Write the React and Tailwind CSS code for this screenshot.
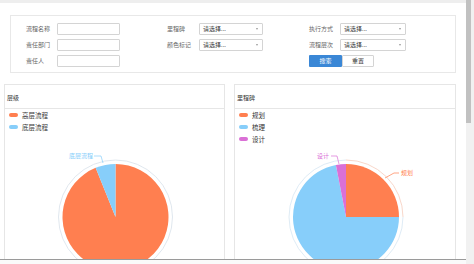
import React from 'react';

const font = { fontFamily: '"Noto Sans CJK SC", "Noto Sans", sans-serif' };

const Field = ({ label, children, labelW = 'w-[31px]' }) => (
  <div className="flex items-center h-[12px]">
    <span className={`${labelW} text-[6px] text-[#666] leading-none`}>{label}</span>
    {children}
  </div>
);

const TextInput = () => (
  <div className="w-[63px] h-[12px] border border-[#d4d4d4] rounded-[1px] bg-white" />
);

const Select = ({ w = 'w-[64px]' }) => (
  <div className={`${w} h-[12px] border border-[#d4d4d4] rounded-[1px] bg-white flex items-center justify-between pl-[3px] pr-[4px]`}>
    <span className="text-[6px] text-[#333] leading-none">请选择...</span>
    <span className="w-0 h-0 border-l-[1.5px] border-r-[1.5px] border-t-[2px] border-l-transparent border-r-transparent border-t-[#999]" />
  </div>
);

const Legend = ({ items }) => (
  <div className="absolute left-[4px] top-[2px] flex flex-col gap-[4px]">
    {items.map((it) => (
      <div key={it.name} className="flex items-center h-[8px]">
        <span className="w-[9px] h-[4px] rounded-full" style={{ backgroundColor: it.color }} />
        <span className="ml-[4px] text-[6.5px] text-[#333] leading-none">{it.name}</span>
      </div>
    ))}
  </div>
);

const Panel = ({ title, legend, children }) => (
  <div className="border border-[#e6e6e6] bg-white h-[200px] flex flex-col">
    <div className="h-[25px] flex items-center pl-[2px] border-b border-[#e6e6e6]">
      <span className="text-[6px] text-[#333] leading-none mt-[3px]">{title}</span>
    </div>
    <div className="relative flex-1">
      <Legend items={legend} />
      {children}
    </div>
  </div>
);

const LeftPie = () => (
  <svg width="220" height="174" className="block">
    <circle cx="110.5" cy="108" r="57" fill="none" stroke="#d8e1ea" strokeWidth="0.8" />
    <path d="M110.5 108 L110.5 55 A53 53 0 1 1 90.65 58.86 Z" fill="#ff7f50" />
    <path d="M110.5 108 L90.65 58.86 A53 53 0 0 1 110.5 55 Z" fill="#87cefa" />
    <polyline points="98,54 96,47 89,47" fill="none" stroke="#87cefa" strokeWidth="0.7" />
    <text x="64" y="49" fontSize="6" fill="#87cefa" style={font}>底层流程</text>
  </svg>
);

const RightPie = () => (
  <svg width="220" height="174" className="block">
    <path d="M111 51 A57 57 0 0 1 168 108" fill="none" stroke="#f6cdbd" strokeWidth="0.8" />
    <path d="M168 108 A57 57 0 1 1 111 51" fill="none" stroke="#d6e6f2" strokeWidth="0.8" />
    <path d="M111 108 L111 55 A53 53 0 0 1 164 108 Z" fill="#ff7f50" />
    <path d="M111 108 L164 108 A53 53 0 1 1 100.89 55.97 Z" fill="#87cefa" />
    <path d="M111 108 L100.89 55.97 A53 53 0 0 1 111 55 Z" fill="#da70d6" />
    <polyline points="150,69 159,64 164,64" fill="none" stroke="#ff7f50" strokeWidth="0.7" />
    <text x="166" y="66" fontSize="6" fill="#ff7f50" style={font}>规划</text>
    <polyline points="104,55 102,47 96,47" fill="none" stroke="#da70d6" strokeWidth="0.7" />
    <text x="82" y="49" fontSize="6" fill="#da70d6" style={font}>设计</text>
  </svg>
);

export default function App() {
  return (
    <div className="w-[474px] h-[264px] flex bg-white overflow-hidden" style={font}>
      <div className="flex-1 flex flex-col min-w-0">
        <div className="h-[259px] overflow-hidden flex flex-col">
          <div className="h-[3px] bg-[#eeeeee] shrink-0" />
          {/* Search form */}
          <div className="mx-[10px] mt-[12px] h-[58px] border border-[#e8e8e8] pt-[7px] pl-[15px] shrink-0">
            <div className="grid grid-cols-[141px_142px_1fr] gap-y-[4px]">
              <Field label="流程名称"><TextInput /></Field>
              <Field label="里程碑" labelW="w-[32px]"><Select /></Field>
              <Field label="执行方式"><Select w="w-[66px]" /></Field>
              <Field label="责任部门"><TextInput /></Field>
              <Field label="颜色标记" labelW="w-[32px]"><Select /></Field>
              <Field label="流程层次"><Select w="w-[66px]" /></Field>
              <Field label="责任人"><TextInput /></Field>
              <div />
              <div className="flex h-[12px]">
                <button className="w-[33px] h-[12px] bg-[#3a87d6] text-white text-[6px] leading-none rounded-[1px]">搜索</button>
                <button className="w-[32px] h-[12px] bg-white border border-[#d4d4d4] text-[#333] text-[6px] leading-none rounded-[1px]">重置</button>
              </div>
            </div>
          </div>
          {/* Charts */}
          <div className="grid grid-cols-[221px_222px] gap-[9px] ml-[4px] mt-[11px]">
            <Panel
              title="层级"
              legend={[
                { name: '高层流程', color: '#ff7f50' },
                { name: '底层流程', color: '#87cefa' },
              ]}
            >
              <LeftPie />
            </Panel>
            <Panel
              title="里程碑"
              legend={[
                { name: '规划', color: '#ff7f50' },
                { name: '梳理', color: '#87cefa' },
                { name: '设计', color: '#da70d6' },
              ]}
            >
              <RightPie />
            </Panel>
          </div>
        </div>
        <div className="flex-1 border-t border-[#9a9a9a] bg-[#fafafa]" />
      </div>
      {/* scrollbar */}
      <div className="w-[8px] bg-[#f1f1f1] flex">
        <div className="w-[5px] h-[123px] bg-[#c1c1c1]" />
      </div>
    </div>
  );
}
